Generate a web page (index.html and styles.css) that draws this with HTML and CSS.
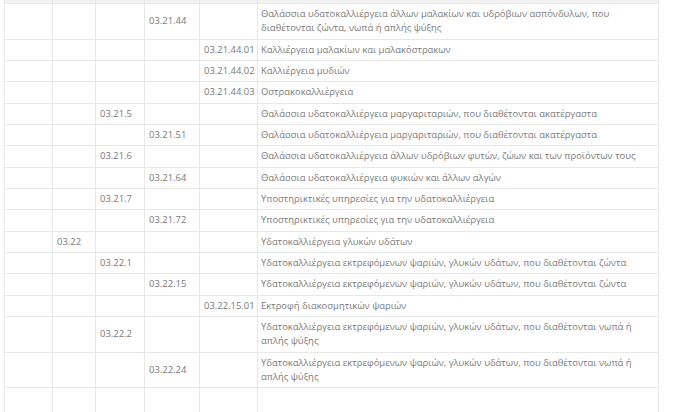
FILE: index.html
```html
<!DOCTYPE html>
<html lang="el">
<head>
<meta charset="utf-8">
<link rel="stylesheet" href="styles.css">
</head>
<body>
<div class="wrap">
<table class="codes">
<colgroup>
<col class="c1"><col class="c2"><col class="c3"><col class="c4"><col class="c5"><col class="c6">
</colgroup>
<tbody>
<tr class="cut"><td></td><td></td><td></td><td></td><td></td><td></td></tr>
<tr><td></td><td></td><td></td><td>03.21.44</td><td></td><td>Θαλάσσια υδατοκαλλιέργεια άλλων μαλακίων και υδρόβιων ασπόνδυλων, που διαθέτονται ζώντα, νωπά ή απλής ψύξης</td></tr>
<tr><td></td><td></td><td></td><td></td><td>03.21.44.01</td><td>Καλλιέργεια μαλακίων και μαλακόστρακων</td></tr>
<tr><td></td><td></td><td></td><td></td><td>03.21.44.02</td><td>Καλλιέργεια μυδιών</td></tr>
<tr><td></td><td></td><td></td><td></td><td>03.21.44.03</td><td>Οστρακοκαλλιέργεια</td></tr>
<tr><td></td><td></td><td>03.21.5</td><td></td><td></td><td>Θαλάσσια υδατοκαλλιέργεια μαργαριταριών, που διαθέτονται ακατέργαστα</td></tr>
<tr><td></td><td></td><td></td><td>03.21.51</td><td></td><td>Θαλάσσια υδατοκαλλιέργεια μαργαριταριών, που διαθέτονται ακατέργαστα</td></tr>
<tr><td></td><td></td><td>03.21.6</td><td></td><td></td><td>Θαλάσσια υδατοκαλλιέργεια άλλων υδρόβιων φυτών, ζώων και των προϊόντων τους</td></tr>
<tr><td></td><td></td><td></td><td>03.21.64</td><td></td><td>Θαλάσσια υδατοκαλλιέργεια φυκιών και άλλων αλγών</td></tr>
<tr><td></td><td></td><td>03.21.7</td><td></td><td></td><td>Υποστηρικτικές υπηρεσίες για την υδατοκαλλιέργεια</td></tr>
<tr><td></td><td></td><td></td><td>03.21.72</td><td></td><td>Υποστηρικτικές υπηρεσίες για την υδατοκαλλιέργεια</td></tr>
<tr><td></td><td>03.22</td><td></td><td></td><td></td><td>Υδατοκαλλιέργεια γλυκών υδάτων</td></tr>
<tr><td></td><td></td><td>03.22.1</td><td></td><td></td><td>Υδατοκαλλιέργεια εκτρεφόμενων ψαριών, γλυκών υδάτων, που διαθέτονται ζώντα</td></tr>
<tr><td></td><td></td><td></td><td>03.22.15</td><td></td><td>Υδατοκαλλιέργεια εκτρεφόμενων ψαριών, γλυκών υδάτων, που διαθέτονται ζώντα</td></tr>
<tr><td></td><td></td><td></td><td></td><td>03.22.15.01</td><td>Εκτροφή διακοσμητικών ψαριών</td></tr>
<tr><td></td><td></td><td>03.22.2</td><td></td><td></td><td>Υδατοκαλλιέργεια εκτρεφόμενων ψαριών, γλυκών υδάτων, που διαθέτονται νωπά ή απλής ψύξης</td></tr>
<tr><td></td><td></td><td></td><td>03.22.24</td><td></td><td>Υδατοκαλλιέργεια εκτρεφόμενων ψαριών, γλυκών υδάτων, που διαθέτονται νωπά ή απλής ψύξης</td></tr>
<tr class="tall"><td></td><td></td><td></td><td></td><td></td><td></td></tr>
</tbody>
</table>
</div>
</body>
</html>
```
FILE: styles.css
```css
html, body {
  margin: 0;
  padding: 0;
  background: #ffffff;
  overflow: hidden;
}
.wrap {
  padding-left: 4px;
  width: 654px;
}
.codes {
  border-collapse: collapse;
  table-layout: fixed;
  width: 654px;
  font-family: "Open Sans", "Noto Sans", sans-serif;
  font-size: 9.45px;
  color: #7a7a7a;
}
.c1 { width: 48px; }
.c2 { width: 43px; }
.c3 { width: 49px; }
.c4 { width: 55px; }
.c5 { width: 58px; }
.c6 { width: 401px; }
.codes td {
  border: 1px solid #e8e8e8;
  padding: 3px 2px 3px 4px;
  line-height: 14.33px;
  vertical-align: middle;
  white-space: normal;
}
.codes td:nth-child(6) {
  padding-left: 3px;
  padding-right: 16px;
}
.codes tr.cut td {
  height: 3px;
  padding: 0;
  line-height: 3px;
  background: #f2f2f2;
  border-top: none;
}
.codes tr.tall td {
  height: 40px;
}
```
